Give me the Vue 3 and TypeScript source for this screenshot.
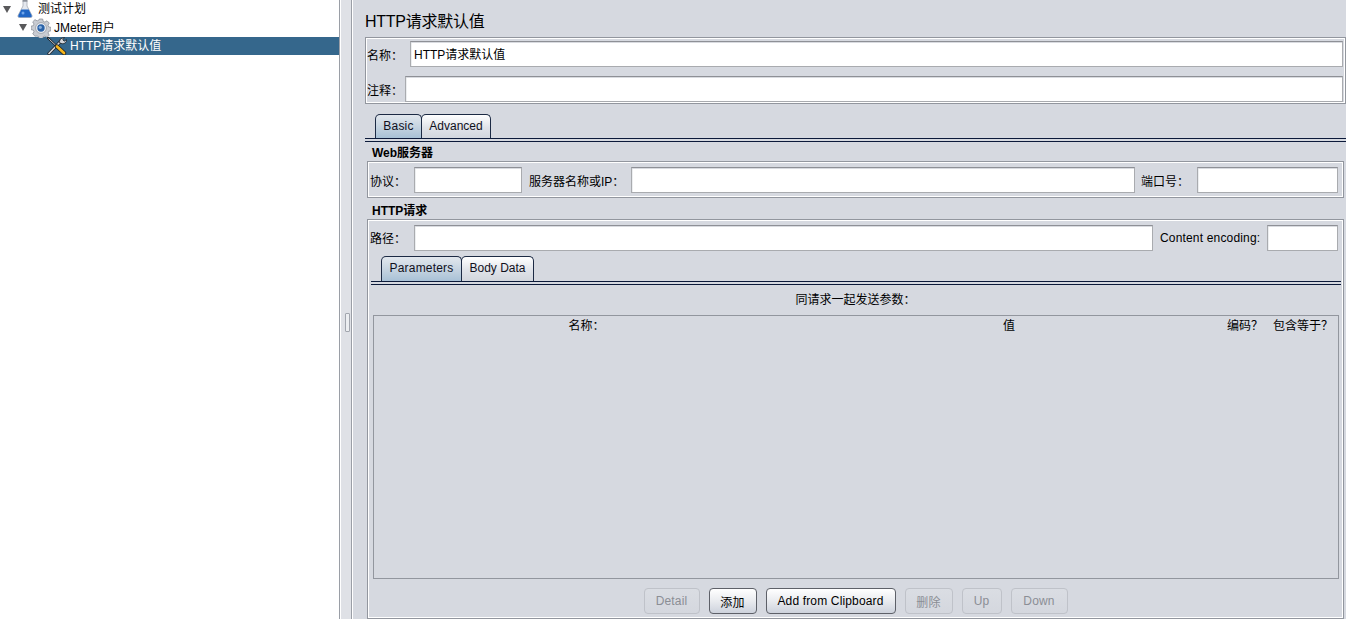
<script setup lang="ts">
const buttons = [
  { label: 'Detail', width: 56, off: true },
  { label: '添加', width: 48, off: false },
  { label: 'Add from Clipboard', width: 130, off: false },
  { label: '删除', width: 48, off: true },
  { label: 'Up', width: 40, off: true },
  { label: 'Down', width: 57, off: true },
]
</script>

<template>
  <div class="app">
    <aside class="tree">
      <div class="row r1">
        <span class="arrow"></span>
        <svg class="ico flask" width="16" height="18" viewBox="0 0 16 18">
          <path d="M6 1h4v5l5 9.500c.4 1-.2 2-1.300 2H2.300c-1.100 0-1.700-1-1.300-2L6 6z" fill="#e4e8ee" stroke="#a4a9b2" stroke-width=".8" />
          <path d="M4.300 9.500h7.400l3 6c.3.900-.2 1.800-1.200 1.800H2.500c-1 0-1.500-.9-1.200-1.800z" fill="#2166c4" />
          <circle cx="6" cy="13" r="1.500" fill="#6fa5ea" />
          <rect x="5.500" y="0" width="5" height="1.600" fill="#8a8f98" />
        </svg>
        <span class="tlabel">测试计划</span>
      </div>
      <div class="row r2">
        <span class="arrow"></span>
        <svg class="ico gear" width="20" height="20" viewBox="0 0 20 20">
          <path d="M8.300 1h3.400l.5 2.400 1.700.7 2.100-1.300 2.300 2.300-1.300 2.100.7 1.700 2.300.5v3.400l-2.300.5-.7 1.700 1.300 2.100-2.300 2.300-2.100-1.300-1.700.7-.5 2.300H8.300l-.5-2.300-1.700-.7L4 18.200l-2.300-2.300L3 13.800l-.7-1.700L0 11.600V8.200l2.300-.5.700-1.700-1.300-2.100L4 1.600l2.100 1.300 1.700-.7z" fill="#c9ccd2" stroke="#83878f" stroke-width=".7" />
          <circle cx="10" cy="10" r="5.400" fill="#eef0f3" stroke="#8d9199" stroke-width=".7" />
          <circle cx="10" cy="10" r="3.700" fill="#2a62a8" />
          <circle cx="9.300" cy="9.300" r="1.600" fill="#86aedd" />
        </svg>
        <span class="tlabel">JMeter用户</span>
      </div>
      <div class="row r3">
        <svg class="ico tool" width="20" height="18" viewBox="0 0 20 18">
          <path d="M1 1 9.500 9" stroke="#1d2126" stroke-width="2.200" stroke-linecap="round" />
          <path d="M1.500 1.500 9.500 9" stroke="#d8dbe0" stroke-width=".9" />
          <path d="M2 16.500 14 4" stroke="#1d2126" stroke-width="3.200" stroke-linecap="round" />
          <path d="M2 16.500 14 4" stroke="#d3d6db" stroke-width="1.700" stroke-linecap="round" />
          <path d="M12 5.500 13.500 1.800 17.500.4l-1.700 2.400 1.400 1.400 2.400-1.600c.1 2.600-1.800 4.400-4.500 4.200z" fill="#d3d6db" stroke="#1d2126" stroke-width=".8" />
          <path d="M10 9.500 17 16" stroke="#1d2126" stroke-width="4.400" stroke-linecap="round" />
          <path d="M10 9.500 17 16" stroke="#f4b51e" stroke-width="2.800" stroke-linecap="round" />
        </svg>
        <span class="tlabel">HTTP请求默认值</span>
      </div>
    </aside>

    <div class="splitter"><span class="grip"></span></div>

    <main class="main">
      <h1 class="title">HTTP请求默认值</h1>

      <section class="panel names">
        <div class="frow">
          <label class="lb name-lb">名称：</label>
          <div class="input val">HTTP请求默认值</div>
        </div>
        <div class="frow">
          <label class="lb note-lb">注释：</label>
          <div class="input"></div>
        </div>
      </section>

      <div class="tabs outer">
        <span class="tab active basic">Basic</span>
        <span class="tab adv">Advanced</span>
      </div>
      <div class="tabline"></div>

      <div class="gtitle web">Web服务器</div>
      <section class="panel web-panel">
        <label class="lb l-proto">协议：</label>
        <div class="input i-proto"></div>
        <label class="lb l-server">服务器名称或IP：</label>
        <div class="input grow"></div>
        <label class="lb l-port">端口号：</label>
        <div class="input i-port"></div>
      </section>

      <div class="gtitle http">HTTP请求</div>
      <section class="panel http-panel">
        <div class="path-row">
          <label class="lb l-proto">路径：</label>
          <div class="input grow"></div>
          <label class="lb l-enc">Content encoding:</label>
          <div class="input i-enc"></div>
        </div>

        <div class="tabs inner">
          <span class="tab active params">Parameters</span>
          <span class="tab body">Body Data</span>
        </div>
        <div class="tabline sub"></div>

        <div class="caption">同请求一起发送参数：</div>

        <div class="table">
          <div class="thead">
            <span>名称：</span>
            <span>值</span>
            <span>编码？</span>
            <span>包含等于？</span>
          </div>
        </div>

        <div class="buttons">
          <button
            v-for="b in buttons"
            :key="b.label"
            class="btn"
            :class="{ off: b.off }"
            :style="{ width: b.width + 'px' }"
            type="button"
          >{{ b.label }}</button>
        </div>
      </section>
    </main>
  </div>
</template>

<style>
html, body { margin: 0; height: 100%; overflow: hidden; background: #d6d9e0; }
</style>

<style scoped>
.app {
  display: flex;
  width: 1346px;
  height: 619px;
  overflow: hidden;
  background: #d6d9e0;
  font-family: "Liberation Sans", "Noto Sans CJK SC", sans-serif;
  font-size: 12px;
  color: #000;
}
.tree {
  width: 339px;
  flex: none;
  background: #fff;
  box-sizing: border-box;
}
.row {
  display: flex;
  align-items: center;
  box-sizing: border-box;
}
.r1 { height: 18px; padding-left: 3px; }
.r2 { height: 19px; padding-left: 19px; }
.r3 { height: 18px; padding-left: 47px; background: #35678c; color: #fff; }
.arrow {
  width: 0;
  height: 0;
  border-left: 4px solid transparent;
  border-right: 4px solid transparent;
  border-top: 7px solid #59595b;
  flex: none;
}
.ico { flex: none; }
.flask { margin-left: 6px; margin-right: 5px; }
.gear { margin-left: 4px; margin-right: 3px; }
.tool { margin-right: 3px; }
.tlabel { white-space: nowrap; }
.r1 .tlabel { margin-bottom: 3px; }
.r2 .tlabel { margin-bottom: 2px; }
.r3 .tlabel { margin-bottom: 3px; }

.splitter {
  width: 14px;
  flex: none;
  box-sizing: border-box;
  border-left: 1px solid #9a9ea6;
  border-right: 1px solid #fff;
  box-shadow: inset 1px 0 0 #fff, inset -1px 0 0 #9a9ea6;
  background: #dfe1e6;
  display: flex;
  align-items: flex-start;
  padding-top: 313px;
}
.grip {
  width: 3px;
  height: 17px;
  margin-left: 5px;
  border: 1px solid #a2a6ae;
  border-radius: 1px;
  background: #eceef1;
}

.main {
  flex: 1;
  min-width: 0;
  display: flex;
  flex-direction: column;
  padding-left: 12px;
  box-sizing: border-box;
}
.title {
  margin: 0;
  height: 37px;
  line-height: 43px;
  font-size: 16px;
  font-weight: 400;
  letter-spacing: -.25px;
  white-space: nowrap;
  flex: none;
}
.panel {
  box-sizing: border-box;
  border: 1px solid #92969e;
  box-shadow: inset 0 0 0 1px #fff;
  flex: none;
}
.names {
  height: 67px;
  padding: 3px 2px 0 1px;
  display: flex;
  flex-direction: column;
  gap: 9px;
}
.frow { display: flex; align-items: center; height: 26px; }
.lb { white-space: nowrap; flex: none; }
.name-lb { width: 43px; }
.note-lb { width: 38px; }
.input {
  flex: 1;
  height: 26px;
  box-sizing: border-box;
  background: #fff;
  border: 1px solid #a9abaf;
  border-top-color: #8e9096;
  box-shadow: inset 0 1px 0 #d9dbe0, inset 1px 0 0 #eceef0;
  padding-left: 3px;
  white-space: nowrap;
}
.val { line-height: 26px; }
.tabs { display: flex; flex: none; }
.outer { margin: 10px 0 0 10px; height: 24px; }
.tab {
  display: flex;
  align-items: center;
  justify-content: center;
  box-sizing: border-box;
  height: 100%;
  padding-bottom: 2px;
  border: 1px solid #1c2a44;
  border-bottom: 0;
  border-radius: 5px 5px 0 0;
  color: #10101c;
  background: linear-gradient(#ffffff, #e0e3e9 55%, #d2d6dd);
}
.tab + .tab { margin-left: -1px; }
.tab.active { background: linear-gradient(#e2e7ed, #c9d6e2 45%, #a8c1d6); }
.basic { width: 47px; letter-spacing: .2px; }
.adv { width: 70px; }
.params { width: 81px; letter-spacing: .2px; }
.body { width: 73px; }
.tabline {
  height: 4px;
  flex: none;
  box-sizing: border-box;
  border-top: 1px solid #0c1a3a;
  border-bottom: 1px solid #0c1a3a;
}
.gtitle {
  height: 19px;
  line-height: 22px;
  font-weight: 700;
  margin-left: 7px;
  flex: none;
}
.web-panel {
  height: 37px;
  margin: 0 2px;
  padding: 1px 5px 0 2px;
  display: flex;
  align-items: center;
  gap: 7px;
}
.http { height: 21px; line-height: 26px; }
.l-proto { width: 37px; }
.path-row .l-proto { margin-bottom: 2px; }
.i-proto { flex: 0 0 108px; }
.l-server { width: 95px; }
.grow { flex: 1; }
.l-port { width: 48px; margin-left: -1px; margin-right: 1px; }
.i-port { flex: 0 0 141px; }

.http-panel {
  flex: 1;
  min-height: 0;
  margin: 0 2px;
  padding: 5px 2px 0 2px;
  display: flex;
  flex-direction: column;
}
.path-row {
  display: flex;
  align-items: center;
  gap: 7px;
  height: 26px;
  flex: none;
  padding-right: 3px;
}
.l-enc { width: 100px; letter-spacing: .17px; }
.i-enc { flex: 0 0 71px; }
.inner { margin: 5px 0 0 11px; height: 25px; }
.sub { margin-left: 1px; }
.caption {
  height: 30px;
  line-height: 30px;
  text-align: center;
  flex: none;
}
.table {
  height: 264px;
  flex: none;
  margin: 0 2px 0 3px;
  box-sizing: border-box;
  border: 1px solid #92969e;
}
.thead {
  display: grid;
  grid-template-columns: 425px 420px 52px 64px;
  line-height: 20px;
  text-align: center;
  white-space: nowrap;
}
.buttons {
  display: flex;
  justify-content: center;
  gap: 9px;
  margin-top: 9px;
  flex: none;
}
.btn {
  height: 26px;
  box-sizing: border-box;
  padding: 0;
  border: 1px solid #5d6068;
  border-radius: 4px;
  background: linear-gradient(#ffffff, #e9ebef 50%, #cdd2dc);
  font: inherit;
  letter-spacing: .15px;
  color: #000;
  white-space: nowrap;
}
.btn.off {
  border-color: #bfc2c9;
  background: linear-gradient(#dadde3, #d4d7de);
  color: #8b8e95;
}
</style>
